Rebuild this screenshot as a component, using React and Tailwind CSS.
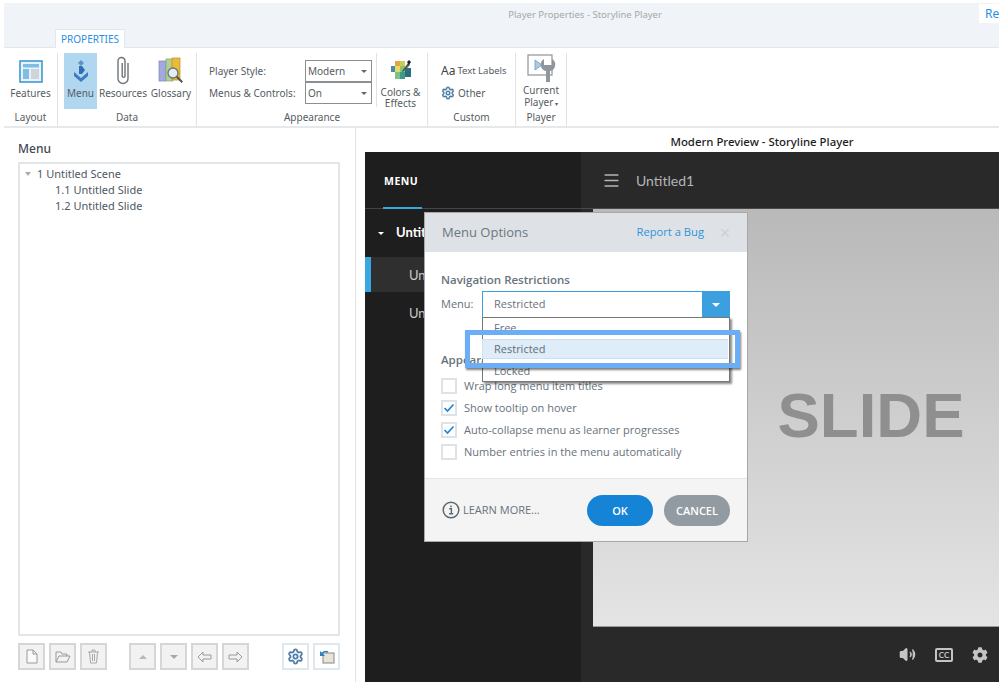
import { Settings, Menu, Volume2 } from "lucide-react";
import { FaCog } from "react-icons/fa";

const ribbonFont = "font-['Noto_Sans',sans-serif]";

const FeaturesIcon = () => (
  <svg width="24" height="24" viewBox="0 0 24 24">
    <rect x="1" y="2" width="22" height="21" fill="#e8f2fa" stroke="#3f9ad0" strokeWidth="1.6" />
    <rect x="4" y="5" width="16" height="3.5" fill="#7dbde6" />
    <rect x="4" y="10" width="6" height="10" fill="#7dbde6" />
    <rect x="12" y="10" width="8" height="10" fill="#cfd4d8" />
  </svg>
);

const MenuIcon = () => (
  <svg width="18" height="24" viewBox="0 0 18 24">
    <path d="M9 1l3 3-3 3-3-3z" fill="#5f93c6" />
    <path d="M7 7h3l3 4-3 4H7z" fill="#2f6fb3" />
    <path d="M2 13l7 6 7-6v4l-7 6-7-6z" fill="#3a7cc0" />
  </svg>
);

const ClipIcon = () => (
  <svg width="14" height="29" viewBox="0 0 14 29">
    <path d="M12 7v15.5a5 5 0 0 1-10 0V5a3.5 3.5 0 0 1 7 0v15a1.4 1.4 0 0 1-2.8 0V7" fill="none" stroke="#6d7378" strokeWidth="1.4" />
  </svg>
);

const GlossaryIcon = () => (
  <svg width="26" height="28" viewBox="0 0 26 28">
    <rect x="1" y="4" width="7" height="20" fill="#a3a9e0" stroke="#7d84bd" strokeWidth=".7" />
    <rect x="8" y="2" width="7" height="22" fill="#b4cf92" stroke="#86a66a" strokeWidth=".7" />
    <rect x="14" y="1" width="8" height="22" fill="#e8bb3a" stroke="#b98f22" strokeWidth=".7" />
    <circle cx="15" cy="16" r="5" fill="#e3eef4" stroke="#6b7378" strokeWidth="1.3" />
    <path d="M18.8 19.8l5.5 5.5" stroke="#4d5357" strokeWidth="2" />
  </svg>
);

const ColorsIcon = () => (
  <svg width="22" height="22" viewBox="0 0 22 22">
    <rect x="1" y="7" width="5" height="6" fill="#4a8ba8" />
    <rect x="5" y="2" width="5" height="5" fill="#e2a64a" />
    <rect x="5" y="7" width="5" height="6" fill="#e4dc66" />
    <rect x="10" y="2" width="5" height="5" fill="#c9cc58" />
    <rect x="10" y="7" width="5" height="6" fill="#8cc46c" />
    <rect x="5" y="13" width="5" height="7" fill="#7cc08a" />
    <rect x="10" y="13" width="5" height="7" fill="#3f9a8a" />
    <rect x="15" y="9" width="6" height="9" fill="#27707e" />
    <path d="M12 12l6-8 2 2-7 7z" fill="#555" />
    <path d="M17 3l2-2 2 2-2 3z" fill="#222" />
  </svg>
);

const PlayerIcon = () => (
  <svg width="30" height="30" viewBox="0 0 30 30">
    <rect x="1" y="1" width="24" height="20" fill="#fff" stroke="#8d9499" strokeWidth="1.2" />
    <path d="M8 6l7 5-7 5z" fill="#a9cbe6" stroke="#6f9cc0" strokeWidth=".8" />
    <path d="M17 5a6.5 6.5 0 0 0 2 12v11h4V17a6.5 6.5 0 0 0 2-12v6h-8z" fill="#8f979d" />
  </svg>
);

const RibbonButton = ({ label, active, icon, className = "" }) => (
  <div
    className={`flex flex-col items-center h-[56px] pt-[2px] ${active ? "bg-[#b1d6f0]" : ""} ${className}`}
  >
    <div className="h-[31px] flex items-center justify-center">{icon}</div>
    <span className="text-[10px] leading-[14px] text-[#555c62]">{label}</span>
  </div>
);

const RibbonGroup = ({ label, children, className = "" }) => (
  <div className={`flex flex-col h-[74px] border-r border-[#e1e4e7] ${className}`}>
    <div className="h-[56px] flex">{children}</div>
    <div className="flex-1 text-center text-[10px] leading-[17px] text-[#555c62]">{label}</div>
  </div>
);

const RibbonSelect = ({ value }) => (
  <div className="w-[67px] h-[22px] border border-[#8a8f94] flex items-center justify-between pl-[2px] pr-[4px] text-[10px] text-[#555c62]">
    <span>{value}</span>
    <span className="w-0 h-0 border-x-[3px] border-x-transparent border-t-[3px] border-t-[#666]" />
  </div>
);

const ToolButton = ({ children, on }) => (
  <div
    className={`w-[27px] h-[27px] border-2 flex items-center justify-center ${on ? "border-[#dfe7ef] bg-white" : "border-[#d6d6d6] bg-[#f2f2f2]"}`}
  >
    {children}
  </div>
);

const Check = ({ checked, label }) => (
  <div className="flex items-center h-[22px]">
    <div className="w-[16px] h-[16px] border-2 border-[#dfe3e7] flex items-center justify-center mr-[7px]">
      {checked && (
        <svg width="12" height="10" viewBox="0 0 12 10">
          <path d="M1.5 5l3 3 6-6.5" fill="none" stroke="#1a86d6" strokeWidth="1.7" />
        </svg>
      )}
    </div>
    <span className="text-[11px] text-[#68727b]">{label}</span>
  </div>
);

export default function App() {
  return (
    <div className={`relative w-[999px] h-[682px] overflow-hidden bg-white ${ribbonFont}`}>
      {/* title band */}
      <div className="mt-[3px] ml-[4px] h-[45px] bg-[#f0f3f7] border-b border-[#e4e7ea] relative">
        <div className="absolute left-[51px] top-[26px] w-[70px] h-[19px] bg-white border-x border-t border-[#e4e7ea] text-[10px] leading-[19px] text-center text-[#2b8fe0]">
          PROPERTIES
        </div>
        <div className="text-center text-[9.5px] leading-[24px] text-[#a4a8ac] pl-[167px]">
          Player Properties - Storyline Player
        </div>
        <div className="absolute right-0 top-[1px] w-[20px] h-[19px] bg-white text-[12px] leading-[19px] pl-[6px] text-[#2b8fe0]">
          Re
        </div>
      </div>

      {/* ribbon */}
      <div className="h-[80px] ml-[4px] pt-[5px] border-b-2 border-[#e6e8ea] flex">
        <RibbonGroup label="Layout" className="w-[54px]">
          <RibbonButton label="Features" icon={<FeaturesIcon />} className="w-[54px]" />
        </RibbonGroup>
        <RibbonGroup label="Data" className="w-[139px]">
          <div className="flex pl-[6px]">
            <RibbonButton label="Menu" active icon={<MenuIcon />} className="w-[33px]" />
            <RibbonButton label="Resources" icon={<ClipIcon />} className="w-[52px]" />
            <RibbonButton label="Glossary" icon={<GlossaryIcon />} className="w-[44px]" />
          </div>
        </RibbonGroup>
        <RibbonGroup label="Appearance" className="w-[231px]">
          <div className="flex">
            <div className="w-[108px] pl-[12px] pt-[11px] text-[10px] text-[#555c62] flex flex-col gap-[8px] leading-[14px]">
              <span>Player Style:</span>
              <span>Menus &amp; Controls:</span>
            </div>
            <div className="flex flex-col pt-[7px] pr-[4px] border-r border-[#e1e4e7] h-[54px]">
              <RibbonSelect value="Modern" />
              <RibbonSelect value="On" />
            </div>
            <div className="w-[50px] flex flex-col items-center pt-[6px] pr-[3px]">
              <ColorsIcon />
              <span className="text-[10px] leading-[11px] text-center text-[#555c62] mt-[6px]">
                Colors &amp;
                <br />
                Effects
              </span>
            </div>
          </div>
        </RibbonGroup>
        <RibbonGroup label="Custom" className="w-[88px]">
          <div className="flex flex-col gap-[6px] pl-[13px] pt-[10px] text-[9.5px] leading-[16px] text-[#555c62]">
            <div className="flex items-center gap-[2px]">
              <span className="text-[12px] text-[#444]">Aa</span> Text Labels
            </div>
            <div className="flex items-center gap-[3px]">
              <Settings size={14} color="#4f7fa8" strokeWidth={2.6} />
              <span className="text-[10px]">Other</span>
            </div>
          </div>
        </RibbonGroup>
        <RibbonGroup label="Player" className="w-[51px]">
          <div className="w-full flex flex-col items-center">
            <div className="pt-[1px] pl-[2px] h-[32px]"><PlayerIcon /></div>
            <span className="text-[10px] leading-[12px] text-center text-[#555c62]">
              Current
              <br />
              Player<span className="text-[6px]"> ▾</span>
            </span>
          </div>
        </RibbonGroup>
      </div>

      {/* main area */}
      <div className="flex h-[554px]">
        <div className="w-[356px] h-full border-r border-[#dfe1e3] pl-[18px] pt-[13px] flex flex-col">
          <div className="text-[12px] leading-[16px] text-[#3f4a52] font-medium">Menu</div>
          <div className="mt-[5px] w-[322px] h-[474px] border-2 border-[#e3e5e7] pl-[5px] pt-[2px] text-[11px] leading-[16px] text-[#50585f]">
            <div className="flex items-center">
              <span className="w-0 h-0 border-x-[3px] border-x-transparent border-t-[4px] border-t-[#a8acb0] mr-[6px]" />
              1 Untitled Scene
            </div>
            <div className="pl-[30px]">1.1 Untitled Slide</div>
            <div className="pl-[30px]">1.2 Untitled Slide</div>
          </div>
          <div className="mt-[7px] w-[322px] flex">
            <div className="flex gap-[4px]">
              <ToolButton>
                <svg width="12" height="15" viewBox="0 0 12 15"><path d="M1 1h6l4 4v9H1z M7 1v4h4" fill="#fafafa" stroke="#9a9a9a" /></svg>
              </ToolButton>
              <ToolButton>
                <svg width="16" height="12" viewBox="0 0 16 12"><path d="M1 11V1h5l1 2h5v2 M1 11l3-6h11l-3 6z" fill="none" stroke="#9a9a9a" /></svg>
              </ToolButton>
              <ToolButton>
                <svg width="13" height="15" viewBox="0 0 13 15"><path d="M1 3h11 M5 3V1h3v2 M2.5 3l1 11h6l1-11 M5.5 5v7 M7.5 5v7" fill="none" stroke="#a8a8a8" /></svg>
              </ToolButton>
            </div>
            <div className="flex gap-[4px] ml-[22px]">
              <ToolButton><span className="w-0 h-0 border-x-[4px] border-x-transparent border-b-[4px] border-b-[#b8b8b8]" /></ToolButton>
              <ToolButton><span className="w-0 h-0 border-x-[4px] border-x-transparent border-t-[4px] border-t-[#a8a8a8]" /></ToolButton>
              <ToolButton>
                <svg width="15" height="12" viewBox="0 0 15 12"><path d="M1 6l5-5v3h8v4H6v3z" fill="#f2f2f2" stroke="#9a9a9a" /></svg>
              </ToolButton>
              <ToolButton>
                <svg width="15" height="12" viewBox="0 0 15 12"><path d="M14 6L9 1v3H1v4h8v3z" fill="#f2f2f2" stroke="#9a9a9a" /></svg>
              </ToolButton>
            </div>
            <div className="flex gap-[4px] ml-auto">
              <ToolButton on><Settings size={17} color="#4f7fa8" strokeWidth={2.6} /></ToolButton>
              <ToolButton on>
                <svg width="16" height="15" viewBox="0 0 16 15">
                  <rect x="4" y="4" width="11" height="10" fill="#e8e4d8" stroke="#888" />
                  <path d="M2 6a5 5 0 0 1 7-3" fill="none" stroke="#2f7fc4" strokeWidth="1.6" />
                  <path d="M1 2v5h5z" fill="#2f7fc4" />
                </svg>
              </ToolButton>
            </div>
          </div>
        </div>

        <div className="flex-1 pl-[9px] flex flex-col">
          <div className="h-[24px] pt-[6px] text-center text-[11.4px] leading-[16px] font-medium text-[#1c1c1c] pl-[160px]">
            Modern Preview - Storyline Player
          </div>
          {/* player */}
          <div className="flex-1 flex bg-[#292929] font-['Lato',sans-serif]">
            <div className="w-[216px] bg-[#1e1e1e]">
              <div className="h-[57px] border-b border-[#444] relative">
                <span className="absolute left-[19px] top-[22px] text-[10.5px] leading-[14px] font-bold tracking-[0.5px] text-white font-['Open_Sans',sans-serif]">
                  MENU
                </span>
                <span className="absolute left-[18px] bottom-[-1px] w-[39px] h-[2px] bg-[#3ba7e0]" />
              </div>
              <div className="h-[48px] flex items-center pl-[13px] text-white font-bold text-[13px]">
                <span className="w-0 h-0 border-x-[3px] border-x-transparent border-t-[3px] border-t-white mr-[12px]" />
                Untitled Scene
              </div>
              <div className="h-[35px] bg-[#2f2f2f] border-l-[6px] border-[#3ba7e0] leading-[36px] pl-[38px] text-[13px] text-[#c9c9c9]">
                Untitled
              </div>
              <div className="h-[42px] leading-[42px] pl-[44px] text-[13px] text-[#c9c9c9]">Untitled</div>
            </div>
            <div className="flex-1 flex flex-col">
              <div className="h-[57px] border-b border-[#4a4a4a] flex items-center pl-[21px] text-[#b5b5b5]">
                <Menu size={19} strokeWidth={2} />
                <span className="ml-[15px] text-[14px]">Untitled1</span>
              </div>
              <div className="flex-1 ml-[12px] flex items-center justify-center bg-gradient-to-b from-[#b9b9b9] to-[#e4e4e4] border-b border-[#999]">
                <span className="text-[63.5px] font-bold text-[#8f8f8f] font-['Liberation_Sans',sans-serif] ml-[150px] mb-[4px]">
                  SLIDE
                </span>
              </div>
              <div className="h-[55px] flex items-center justify-end gap-[19px] pr-[11px] text-[#c4c4c4]">
                <Volume2 size={17} fill="#c4c4c4" />
                <span className="w-[18px] h-[14px] border-2 border-[#c4c4c4] rounded-[2px] text-[8px] leading-[10px] text-center font-bold">
                  CC
                </span>
                <FaCog size={16} />
              </div>
            </div>
          </div>
        </div>
      </div>

      {/* dialog */}
      <div className="absolute left-[424px] top-[212px] w-[324px] h-[330px] bg-white border border-[#a8a8a8] flex flex-col font-['Open_Sans',sans-serif]">
        <div className="h-[39px] bg-[#dee2e6] flex items-center pl-[17px] pr-[16px]">
          <span className="text-[13px] text-[#6b7780]">Menu Options</span>
          <span className="ml-auto text-[11.2px] text-[#2f93d8]">Report a Bug</span>
          <span className="ml-[15px] text-[14px] text-[#cdd1d4]">✕</span>
        </div>
        <div className="flex-1 px-[16px] pt-[20px]">
          <div className="text-[11.5px] leading-[16px] font-semibold text-[#68727b]">Navigation Restrictions</div>
          <div className="flex items-center mt-[3px]">
            <span className="w-[41px] text-[11px] text-[#68727b]">Menu:</span>
            <div className="w-[248px] h-[27px] border border-[#3b9fe0] flex items-center">
              <span className="pl-[11px] text-[11px] text-[#68727b]">Restricted</span>
              <span className="ml-auto w-[27px] h-full bg-[#3b9fe0] flex items-center justify-center">
                <span className="w-0 h-0 border-x-[4px] border-x-transparent border-t-[4px] border-t-white" />
              </span>
            </div>
          </div>
          <div className="mt-[34px] text-[11.5px] leading-[16px] font-semibold text-[#68727b]">Appearance</div>
          <div className="mt-[7px]">
            <Check label="Wrap long menu item titles" />
            <Check checked label="Show tooltip on hover" />
            <Check checked label="Auto-collapse menu as learner progresses" />
            <Check label="Number entries in the menu automatically" />
          </div>
        </div>
        <div className="h-[63px] bg-[#f4f4f4] border-t border-[#e1e7ea] flex items-center pl-[17px] pr-[17px]">
          <svg width="18" height="18" viewBox="0 0 18 18">
            <circle cx="9" cy="9" r="7.8" fill="none" stroke="#5d676f" strokeWidth="1.5" />
            <path d="M7.2 7.8h2.2v4.6M7 12.8h4.2M9 4.4v1.8" fill="none" stroke="#5d676f" strokeWidth="1.4" />
          </svg>
          <span className="ml-[3px] text-[11px] text-[#68727b]">LEARN MORE...</span>
          <span className="ml-auto w-[66px] h-[31px] rounded-full bg-[#1583d6] text-white text-[11px] font-semibold leading-[31px] text-center">OK</span>
          <span className="ml-[11px] w-[66px] h-[31px] rounded-full bg-[#929ba2] text-white text-[11px] font-semibold leading-[31px] text-center">CANCEL</span>
        </div>
      </div>

      {/* dropdown list */}
      <div className="absolute left-[482px] top-[317px] w-[248px] h-[65px] bg-white border border-[#777] shadow-[2px_2px_2px_rgba(0,0,0,0.45)] pl-[11px] text-[11px] text-[#68727b] font-['Open_Sans',sans-serif]">
        <div className="h-[21px] leading-[20px]">Free</div>
        <div className="h-[22px] leading-[22px]">Restricted</div>
        <div className="h-[20px] leading-[19px]">Locked</div>
      </div>
      {/* highlight callout */}
      <div className="absolute left-[465px] top-[330px] w-[275px] h-[38px] border-[5px] border-[#6caef5] shadow-[1px_2px_2px_rgba(0,0,0,0.5)] pt-[4px]">
        <div className="ml-[12px] w-[246px] h-[20px] bg-[#dcebf8]/90 border-y border-[#c9e0f2] pl-[12px] text-[11px] leading-[18px] text-[#68727b] font-['Open_Sans',sans-serif]">
          Restricted
        </div>
      </div>
    </div>
  );
}
